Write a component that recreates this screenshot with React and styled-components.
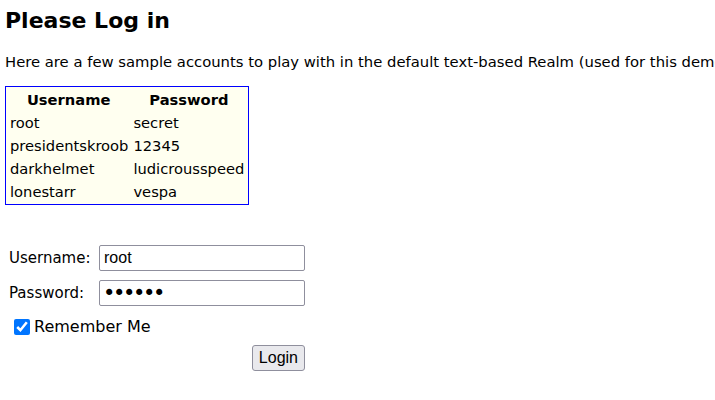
import React, { useState } from 'react';
import styled, { createGlobalStyle } from 'styled-components';

const GlobalStyle = createGlobalStyle`
  body {
    margin: 0;
    padding: 0 5px;
    background: #ffffff;
    color: #000000;
    font-family: "DejaVu Sans", Verdana, sans-serif;
  }
`;

const accounts = [
  { user: 'root', pass: 'secret' },
  { user: 'presidentskroob', pass: '12345' },
  { user: 'darkhelmet', pass: 'ludicrousspeed' },
  { user: 'lonestarr', pass: 'vespa' },
];

const App = () => {
  const [userName, setUserName] = useState('root');
  const [password, setPassword] = useState('secret');
  const [remember, setRemember] = useState(true);

  return (
    <Page>
      <GlobalStyle />
      <Title>Please Log in</Title>
      <Intro>
        Here are a few sample accounts to play with in the default text-based Realm (used for this demo and test installs only).
      </Intro>

      <AccountTable>
        <thead>
          <tr>
            <HeadCell>Username</HeadCell>
            <HeadCell>Password</HeadCell>
          </tr>
        </thead>
        <tbody>
          {accounts.map((a) => (
            <tr key={a.user}>
              <Cell>{a.user}</Cell>
              <Cell>{a.pass}</Cell>
            </tr>
          ))}
        </tbody>
      </AccountTable>

      <LoginForm onSubmit={(e) => e.preventDefault()}>
        <FieldRow>
          <FieldLabel htmlFor="username">Username:</FieldLabel>
          <TextInput id="username" type="text" value={userName} onChange={(e) => setUserName(e.target.value)} />
        </FieldRow>
        <FieldRow>
          <FieldLabel htmlFor="password">Password:</FieldLabel>
          <TextInput
            id="password"
            type="password"
            $masked
            value={password}
            onChange={(e) => setPassword(e.target.value)}
          />
        </FieldRow>
        <CheckRow>
          <Check type="checkbox" checked={remember} onChange={(e) => setRemember(e.target.checked)} />
          <span>Remember Me</span>
        </CheckRow>
        <ButtonRow>
          <SubmitButton type="submit">Login</SubmitButton>
        </ButtonRow>
      </LoginForm>
    </Page>
  );
};

const Page = styled.div`
  width: 710px;
  overflow: hidden;
  white-space: nowrap;
`;

const Title = styled.h2`
  margin: 7px 0 0;
  font-size: 22px;
  font-weight: bold;
  line-height: 27px;
`;

const Intro = styled.p`
  margin: 19px 0 0;
  font-size: 14.8px;
  line-height: 18px;
`;

const AccountTable = styled.table`
  margin-top: 15px;
  border: 1px solid #0000ff;
  background: #fffff0;
  border-collapse: separate;
  border-spacing: 2px;
  font-size: 14.7px;
`;

const HeadCell = styled.th`
  padding: 1px 2px;
  height: 19px;
  font-weight: bold;
  text-align: center;
`;

const Cell = styled.td`
  padding: 1px 2px 1px 2px;
  height: 19px;
  text-align: left;

  &:first-child {
    padding-right: 1px;
  }
`;

const LoginForm = styled.form`
  margin-top: 40px;
  width: 300px;
  display: flex;
  flex-direction: column;
  gap: 9px;
  font-size: 15px;
`;

const FieldRow = styled.div`
  display: flex;
  align-items: center;
  gap: 8px;
`;

const FieldLabel = styled.label`
  width: 84px;
  padding-left: 4px;
`;

const TextInput = styled.input`
  box-sizing: border-box;
  width: 206px;
  height: 26px;
  padding: ${(p) => (p.$masked ? '0 3px' : '1px 4px')};
  border: 1px solid #8f8f9d;
  border-radius: 2px;
  font-family: ${(p) => (p.$masked ? '"DejaVu Sans", sans-serif' : '"Liberation Sans", Arial, sans-serif')};
  font-size: ${(p) => (p.$masked ? '21px' : '16px')};
  letter-spacing: ${(p) => (p.$masked ? '-2.4px' : 'normal')};
`;

const CheckRow = styled.label`
  display: flex;
  align-items: center;
  gap: 4px;
  margin-top: 2px;
  padding-left: 9px;
  font-size: 16px;
`;

const Check = styled.input`
  width: 16px;
  height: 16px;
  margin: 0;
  accent-color: #0075ff;
`;

const ButtonRow = styled.div`
  display: flex;
  justify-content: flex-end;
`;

const SubmitButton = styled.button`
  height: 26px;
  padding: 0 6px;
  border: 1px solid #8f8f9d;
  border-radius: 3px;
  background: #e9e9ed;
  font-family: "Liberation Sans", Arial, sans-serif;
  font-size: 16px;
`;

export default App;
